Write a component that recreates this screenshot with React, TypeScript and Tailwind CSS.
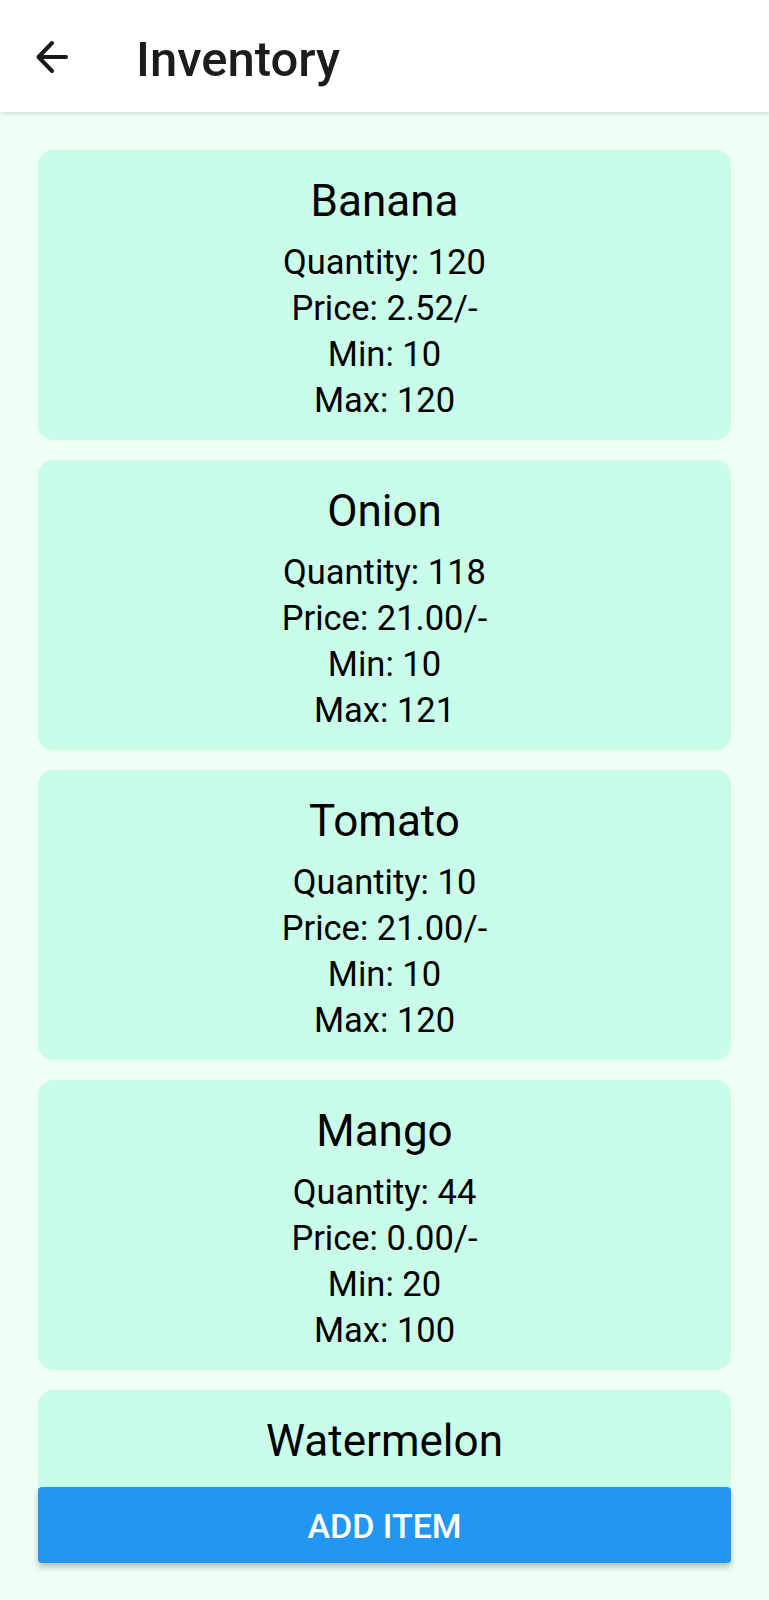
import React from "react";

type Item = {
  name: string;
  quantity?: number;
  price?: string;
  min?: number;
  max?: number;
};

const items: Item[] = [
  { name: "Banana", quantity: 120, price: "2.52", min: 10, max: 120 },
  { name: "Onion", quantity: 118, price: "21.00", min: 10, max: 121 },
  { name: "Tomato", quantity: 10, price: "21.00", min: 10, max: 120 },
  { name: "Mango", quantity: 44, price: "0.00", min: 20, max: 100 },
  // only the name is visible above the button
  { name: "Watermelon" },
];

const BackArrow = () => (
  <svg width="40" height="40" viewBox="0 0 40 40" fill="none">
    <path
      d="M33 20H6M19 6L5.5 20L19 34"
      stroke="#1a1a1a"
      strokeWidth="4"
      strokeLinecap="round"
      strokeLinejoin="round"
    />
  </svg>
);

const App = () => {
  return (
    <div
      className="h-[1600px] overflow-hidden bg-[#effff6] flex flex-col"
      style={{ fontFamily: "Roboto, 'Noto Sans', sans-serif" }}
    >
      {/* Top bar */}
      <header className="h-[112px] shrink-0 bg-white flex items-center shadow-[0_2px_4px_rgba(0,0,0,0.12)] z-10">
        <div className="w-[136px] pl-[33px] pt-[2px] flex items-center">
          <BackArrow />
        </div>
        <h1 className="text-[49px] font-medium text-[#1c1c1c] leading-none mt-[6px]">
          Inventory
        </h1>
      </header>

      {/* List */}
      <main className="flex-1 min-h-0 overflow-hidden px-[38px] pt-[38px] flex flex-col gap-[20px]">
        {items.map((item) => (
          <div
            key={item.name}
            className="shrink-0 h-[290px] rounded-[15px] bg-[#c9fde9] pt-[25px] text-center text-black"
          >
            <div className="text-[44px] leading-[52px]">{item.name}</div>
            {item.quantity !== undefined && (
              <div className="mt-[12px] text-[34.5px] leading-[46px]">
                <p>Quantity: {item.quantity}</p>
                <p>Price: {item.price}/-</p>
                <p>Min: {item.min}</p>
                <p>Max: {item.max}</p>
              </div>
            )}
          </div>
        ))}
      </main>

      {/* Bottom action */}
      <div className="shrink-0 px-[38px] pb-[37px]">
        <button className="w-full h-[76px] rounded-[4px] bg-[#2196f3] text-white text-[34px] font-medium uppercase pt-[3px] shadow-[0_4px_6px_rgba(0,0,0,0.25)]">
          Add Item
        </button>
      </div>
    </div>
  );
};

export default App;
